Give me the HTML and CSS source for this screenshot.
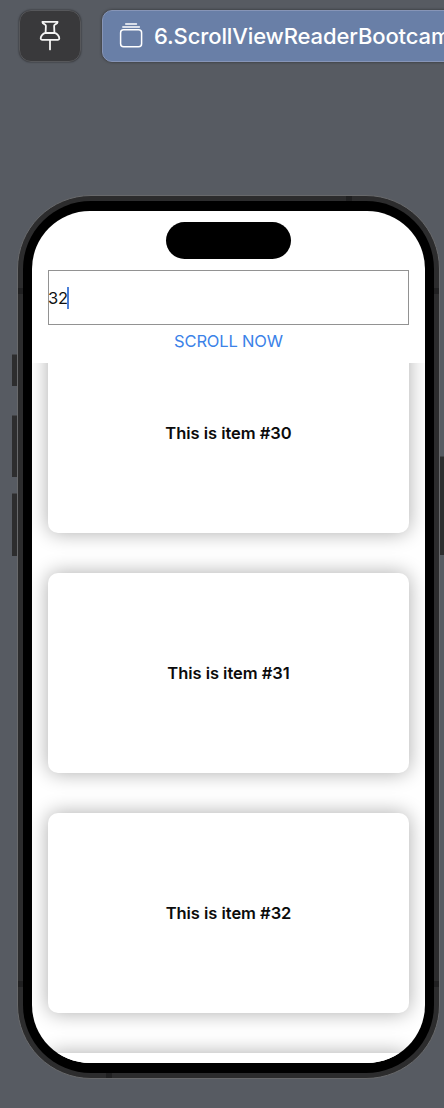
FILE: index.html
```
<!DOCTYPE html>
<html lang="en">
<head>
<meta charset="utf-8">
<title>ScrollViewReader Bootcamp</title>
<link rel="stylesheet" href="styles.css">
</head>
<body>
<header class="toolbar">
  <button class="pin" aria-label="Pin preview">
    <svg width="22" height="32" viewBox="0 0 22 32" fill="none" stroke="#f4f4f4" stroke-width="1.8" stroke-linejoin="round" stroke-linecap="round">
      <path d="M3.4 1.9H18.6C18.6 4.2 15 4 15.1 5.7L15.4 12.6C18.3 13.9 20.3 16.6 20.3 18.6Q20.3 19.8 19 19.8H3Q1.7 19.8 1.7 18.6C1.7 16.6 3.7 13.9 6.6 12.6L6.9 5.7C7 4 3.4 4.2 3.4 1.9ZM6.6 13H15.4M11 20.2V29.4"/>
    </svg>
  </button>
  <div class="tab">
    <svg class="stack" width="24" height="26" viewBox="0 0 24 26" fill="none" stroke="#fff" stroke-width="1.5" stroke-linecap="round">
      <rect x="1.6" y="7.8" width="21" height="17" rx="3"/>
      <path d="M3.8 5H20.4M6.7 2H17.5" stroke-width="1.4"/>
    </svg>
    <span class="tab-title">6.ScrollViewReaderBootcamp</span>
  </div>
</header>
<main class="stage">
  <div class="phone">
    <i class="key key-action"></i>
    <i class="key key-up"></i>
    <i class="key key-down"></i>
    <i class="key key-power"></i>
    <div class="frame">
      <i class="band band-top"></i>
      <i class="band band-bottom"></i>
      <i class="band band-lt"></i>
      <i class="band band-rt"></i>
      <i class="band band-lb"></i>
      <i class="band band-rb"></i>
      <div class="bezel">
        <div class="screen">
          <div class="island"></div>
          <div class="field"><span>32</span><i class="caret"></i></div>
          <div class="action"><span>SCROLL NOW</span></div>
          <div class="list">
            <div class="card first"><span>This is item #30</span></div>
            <div class="card"><span>This is item #31</span></div>
            <div class="card"><span>This is item #32</span></div>
            <div class="card"></div>
          </div>
        </div>
      </div>
    </div>
  </div>
</main>
</body>
</html>
```
FILE: styles.css
```
* { box-sizing: border-box; }
body {
  margin: 0;
  width: 444px;
  height: 1108px;
  overflow: hidden;
  background: #575b62;
  font-family: Inter, "Liberation Sans", sans-serif;
}
.toolbar {
  display: flex;
  gap: 21px;
  height: 66px;
  padding: 10px 0 0 19px;
  overflow: hidden;
}
.pin, .tab { height: 52px; border-radius: 10px; }
.pin {
  display: flex;
  flex: none;
  align-items: center;
  justify-content: center;
  width: 62px;
  padding: 0;
  border: 1px solid #56575a;
  border-radius: 12px;
  background: #39393b;
  box-shadow: 0 0 2px rgba(0, 0, 0, .6);
}
.tab {
  display: flex;
  flex: none;
  align-items: center;
  width: 400px;
  padding-left: 16px;
  border: 1px solid #8795b7;
  background: #697fa7;
  box-shadow: 0 0 3px rgba(0, 0, 0, .5);
}
.stack { margin-top: -2px; }
.tab-title {
  margin-left: 11px;
  color: #fff;
  font-size: 22px;
  font-weight: 500;
  line-height: 28px;
  letter-spacing: -.12px;
  white-space: nowrap;
}
.stage { padding: 129px 0 0 17px; }
.phone { position: relative; width: 423px; height: 884px; }
.frame {
  position: relative;
  height: 100%;
  padding: 5px;
  border: 1px solid #68696b;
  border-radius: 74px;
  background: #2c2c2d;
}
.bezel {
  position: relative;
  height: 100%;
  padding: 10px 9px;
  border-radius: 68px;
  background: #000;
}
.screen {
  display: flex;
  flex-direction: column;
  height: 852px;
  overflow: hidden;
  border-radius: 58px;
  background: #fff;
}
.island {
  flex: none;
  align-self: center;
  width: 125px;
  height: 37px;
  margin-top: 11px;
  border-radius: 19px;
  background: #000;
}
.field {
  display: flex;
  flex: none;
  align-items: center;
  height: 55px;
  margin: 11px 16px 0;
  border: 1px solid #929292;
  color: #111;
  font-size: 16.5px;
  letter-spacing: -.3px;
}
.field span { margin-left: -1px; }
.caret { width: 2px; height: 22px; margin-left: -1px; background: #4a7fd8; }
.action {
  flex: none;
  height: 38px;
  padding-top: 6px;
  color: #3b82e8;
  font-size: 16.5px;
  line-height: 21px;
  letter-spacing: -.17px;
  text-align: center;
}
.list {
  display: flex;
  flex: 1;
  flex-direction: column;
  gap: 40px;
  min-height: 0;
  padding: 0 16px;
  overflow: hidden;
}
.card {
  display: flex;
  flex: none;
  align-items: center;
  justify-content: center;
  height: 200px;
  border-radius: 10px;
  background: #fff;
  box-shadow: 0 0 20px rgba(0, 0, 0, .33);
  color: #0b0b0b;
  font-size: 16.5px;
  font-weight: 600;
  line-height: 20px;
  letter-spacing: -.03px;
}
.first { margin-top: -30px; }
.key {
  position: absolute;
  left: -5px;
  width: 5px;
  border-top: 1px solid #444548;
  background: #2d2d2e;
}
.key-action { top: 159px; height: 32px; }
.key-up { top: 220px; height: 62px; }
.key-down { top: 298px; height: 63px; }
.key-power { left: 423px; top: 261px; width: 4px; height: 99px; }
.band { position: absolute; background: #202021; }
.band-top, .band-bottom { width: 6px; height: 5px; }
.band-lt, .band-rt, .band-lb, .band-rb { width: 5px; height: 6px; }
.band-top { top: 0; left: 328px; }
.band-bottom { bottom: 0; left: 88px; }
.band-lt { top: 92px; left: 0; }
.band-rt { top: 92px; right: 0; }
.band-lb { top: 785px; left: 0; }
.band-rb { top: 785px; right: 0; }
```
